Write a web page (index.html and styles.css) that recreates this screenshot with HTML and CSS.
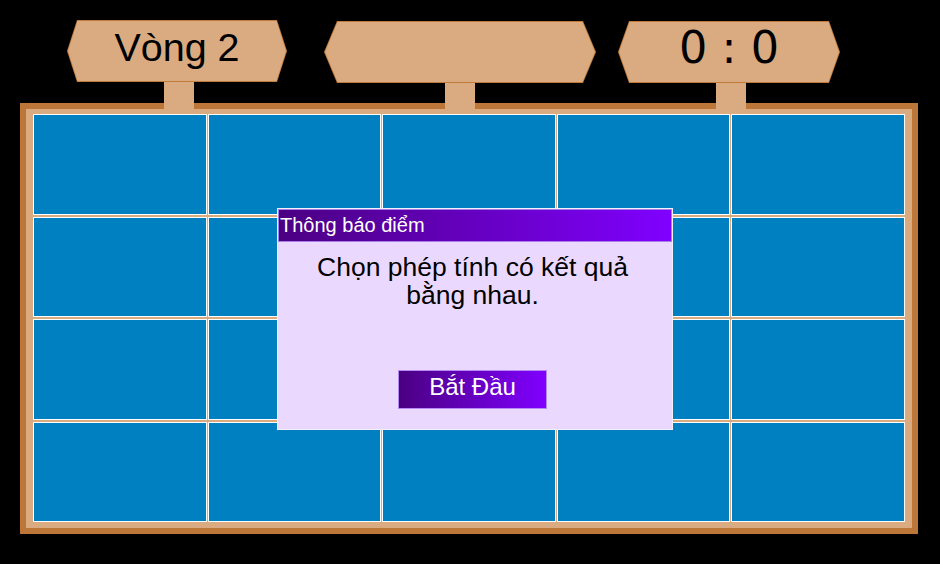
FILE: index.html
```html
<!DOCTYPE html>
<html lang="vi">
<head>
<meta charset="utf-8">
<title>Vòng 2</title>
<link rel="stylesheet" href="styles.css">
</head>
<body>
<div class="stage">
  <header class="signs">
    <div class="sign-col sign-col--round">
      <div class="sign sign--round"><div class="sign-face"><span class="sign-text sign-text--round">Vòng 2</span></div></div>
      <div class="post post--shift"></div>
    </div>
    <div class="sign-col sign-col--mid">
      <div class="sign sign--mid"><div class="sign-face"></div></div>
      <div class="post"></div>
    </div>
    <div class="sign-col sign-col--score">
      <div class="sign sign--score"><div class="sign-face"><span class="sign-text sign-text--score">0 : 0</span></div></div>
      <div class="post post--shift"></div>
    </div>
  </header>

  <main class="board">
    <div class="grid">
      <div class="cell"></div><div class="cell"></div><div class="cell"></div><div class="cell"></div><div class="cell"></div>
      <div class="cell"></div><div class="cell"></div><div class="cell"></div><div class="cell"></div><div class="cell"></div>
      <div class="cell"></div><div class="cell"></div><div class="cell"></div><div class="cell"></div><div class="cell"></div>
      <div class="cell"></div><div class="cell"></div><div class="cell"></div><div class="cell"></div><div class="cell"></div>
    </div>
  </main>

  <section class="dialog">
    <div class="dialog-head">Thông báo điểm</div>
    <div class="dialog-body">
      <p class="dialog-msg">Chọn phép tính có kết quả bằng nhau.</p>
      <button class="start-btn" type="button">Bắt Đầu</button>
    </div>
  </section>
</div>
</body>
</html>
```

FILE: styles.css
```css
* { box-sizing: border-box; }

html, body {
  margin: 0;
  padding: 0;
  background: #000;
}

.stage {
  position: relative;
  width: 940px;
  height: 564px;
  overflow: hidden;
  font-family: "Liberation Sans", Arial, sans-serif;
}

/* ---------- signs ---------- */
.signs {
  display: flex;
  align-items: flex-start;
  height: 109px;
  position: relative;
  z-index: 1;
}

.sign-col {
  display: flex;
  flex-direction: column;
  align-items: center;
}
.sign-col--round { margin-left: 67px; margin-top: 20px; }
.sign-col--mid   { margin-left: 37px; margin-top: 21px; }
.sign-col--score { margin-left: 22px; margin-top: 21px; }

.sign {
  height: 62px;
  padding: 1px;
  background: #c07b3c;
  clip-path: polygon(var(--cut) 0, calc(100% - var(--cut)) 0, 100% 50%, calc(100% - var(--cut)) 100%, var(--cut) 100%, 0 50%);
}
.sign--round { width: 220px; --cut: 10px; }
.sign--mid   { width: 272px; --cut: 13px; }
.sign--score { width: 222px; --cut: 11px; }

.sign-face {
  width: 100%;
  height: 100%;
  background: #daab80;
  display: flex;
  justify-content: center;
  align-items: flex-start;
  clip-path: polygon(calc(var(--cut) - 0.5px) 0, calc(100% - var(--cut) + 0.5px) 0, 100% 50%, calc(100% - var(--cut) + 0.5px) 100%, calc(var(--cut) - 0.5px) 100%, 0 50%);
}

.sign-text {
  color: #000;
  white-space: pre;
}
.sign-text--round {
  font-family: "Liberation Sans", Arial, sans-serif;
  font-size: 39.5px;
  line-height: 52px;
}
.sign-text--score {
  font-family: "DejaVu Sans", Verdana, sans-serif;
  font-size: 44.5px;
  line-height: 52px;
}

.post {
  width: 30px;
  height: 27px;
  background: #daab80;
}
.post--shift { margin-left: 4px; }

/* ---------- board ---------- */
.board {
  margin: -6px 0 0 20px;
  width: 898px;
  height: 431px;
  border: 6px solid #bc7638;
  background: #daab80;
  padding: 5px 7px 6px 7px;
}

.grid {
  width: 100%;
  height: 100%;
  display: grid;
  grid-template-columns: repeat(5, 1fr);
  grid-template-rows: repeat(4, 1fr);
  column-gap: 1px;
  row-gap: 2px;
}

.cell {
  background: #0080c0;
  border: 1px solid #fff;
}

/* ---------- dialog ---------- */
.dialog {
  position: absolute;
  left: 277px;
  top: 208px;
  width: 396px;
  height: 222px;
  background: #ebd8ff;
  border: 1px solid #f4f0f8;
  display: flex;
  flex-direction: column;
  z-index: 2;
}

.dialog-head {
  height: 33px;
  border: 1px solid #a97ee8;
  background: linear-gradient(to right, #4b0082, #8000ff);
  color: #fff;
  font-size: 20px;
  line-height: 31px;
  padding-left: 1px;
  white-space: nowrap;
}

.dialog-body {
  flex: 1;
  display: flex;
  flex-direction: column;
  align-items: center;
  padding: 11px 33px 0 28px;
}

.dialog-msg {
  margin: 0;
  font-size: 26.5px;
  line-height: 28px;
  color: #000;
  text-align: center;
}

.start-btn {
  margin-top: 61px;
  width: 149px;
  height: 39px;
  border: 1px solid #b58af2;
  background: linear-gradient(to right, #4b0082, #8000ff);
  color: #fff;
  font-family: "Liberation Sans", Arial, sans-serif;
  font-size: 24px;
  line-height: 31px;
  padding: 0 0 6px 0;
  border-radius: 0;
  cursor: pointer;
}
```
